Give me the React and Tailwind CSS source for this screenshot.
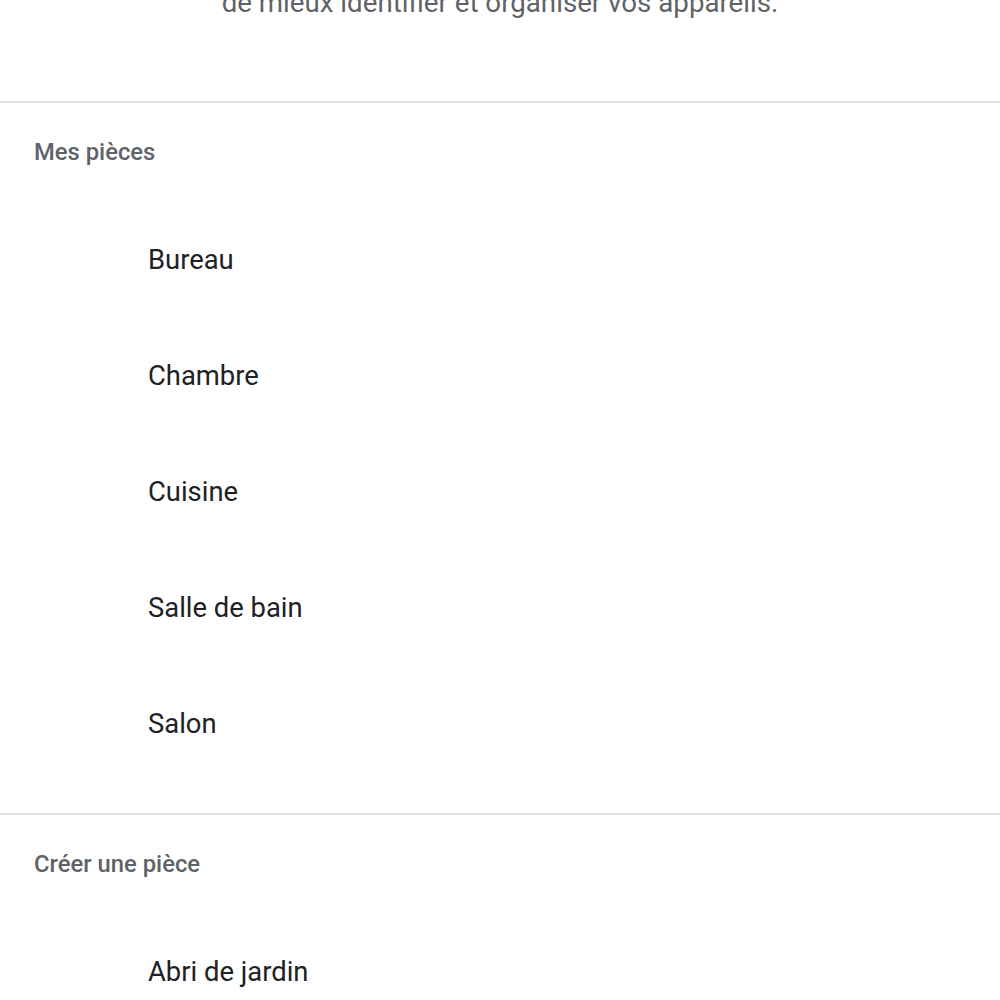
export default function App() {
  const myRooms = ["Bureau", "Chambre", "Cuisine", "Salle de bain", "Salon"];
  const newRooms = ["Abri de jardin"];

  return (
    <div className="w-[1000px] h-[1000px] overflow-hidden bg-white" style={{ fontFamily: "Roboto, 'Noto Sans', sans-serif" }}>
      <p className="-mt-[15px] h-[36px] leading-[36px] text-center text-[27.7px] text-[#5f6368]">
        de mieux identifier et organiser vos appareils.
      </p>
      <div className="mt-[80px] h-[2px] bg-[#e0e0e0]" />

      <div className="h-[100px] flex items-center px-[34px]">
        <h2 className="text-[23.8px] font-medium text-[#5f6368]">Mes pièces</h2>
      </div>
      <ul>
        {myRooms.map((room) => (
          <li key={room} className="h-[116px] flex items-center pl-[148px] text-[27.4px] text-[#202124]">
            {room}
          </li>
        ))}
      </ul>

      <div className="mt-[30px] h-[2px] bg-[#e0e0e0]" />
      <div className="h-[100px] flex items-center px-[34px]">
        <h2 className="text-[23.8px] font-medium text-[#5f6368]">Créer une pièce</h2>
      </div>
      <ul>
        {newRooms.map((room) => (
          <li key={room} className="h-[116px] flex items-center pl-[148px] text-[27.4px] text-[#202124]">
            {room}
          </li>
        ))}
      </ul>
    </div>
  );
}
